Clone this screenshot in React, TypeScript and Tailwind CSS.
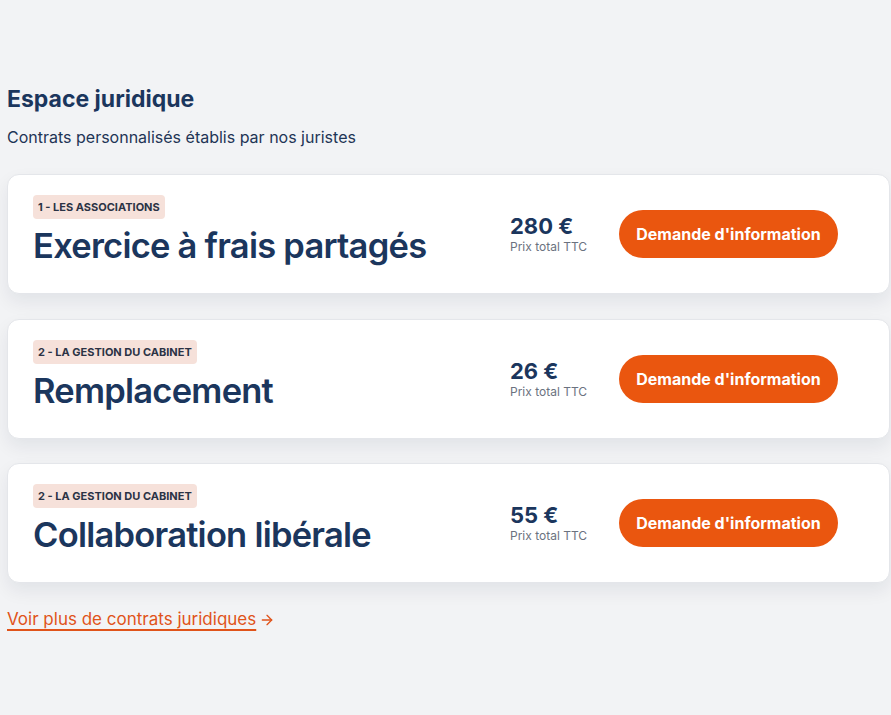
import { ArrowRight } from "lucide-react"

const contrats = [
  { tag: "1 - Les associations", title: "Exercice à frais partagés", price: "280 €" },
  { tag: "2 - La gestion du cabinet", title: "Remplacement", price: "26 €" },
  { tag: "2 - La gestion du cabinet", title: "Collaboration libérale", price: "55 €" },
]

export default function App() {
  return (
    <div className="min-h-screen bg-[#f2f3f5] pl-[7px] pr-px pt-[84px] font-['Inter',sans-serif] text-[#1b365d]">
      <h2 className="text-[23px] font-bold tracking-[0em] leading-[30px]">Espace juridique</h2>
      <p className="mt-[13px] text-[16px] leading-[20px] text-[#1f3556]">Contrats personnalisés établis par nos juristes</p>

      <div className="mt-[27px] flex flex-col gap-[24.5px]">
        {contrats.map((c, i) => (
          <div
            key={i}
            className="flex h-[120px] items-center rounded-[12px] border border-[#e4e6ea] bg-white pl-[25px] pr-[51px] shadow-[0_8px_18px_rgba(20,30,50,0.07)]"
          >
            <div className="flex flex-1 flex-col items-start pb-[5px]">
              <span className="rounded-[4px] bg-[#f6e1da] px-[5px] py-[5px] text-[11px] font-bold uppercase leading-[14px] text-[#2b3345]">
                {c.tag}
              </span>
              <span className="mt-[5px] text-[34.5px] font-semibold leading-[44px] tracking-[-0.022em] text-[#1b365d]">
                {c.title}
              </span>
            </div>
            <div className="flex w-[109px] flex-col">
              <span className="text-[22px] font-bold leading-[26px]">{c.price}</span>
              <span className="text-[12px] leading-[16px] text-[#6b7280]">Prix total TTC</span>
            </div>
            <button className="h-[48px] w-[219px] rounded-full bg-[#ea560f] text-[16px] font-bold text-white">
              Demande d'information
            </button>
          </div>
        ))}
      </div>

      <a href="#" className="mt-[24px] inline-flex items-center gap-[3px] text-[17px] text-[#e0531a]">
        <span className="underline decoration-2 underline-offset-[4px]">Voir plus de contrats juridiques</span>
        <ArrowRight size={16} strokeWidth={2} />
      </a>
    </div>
  )
}
